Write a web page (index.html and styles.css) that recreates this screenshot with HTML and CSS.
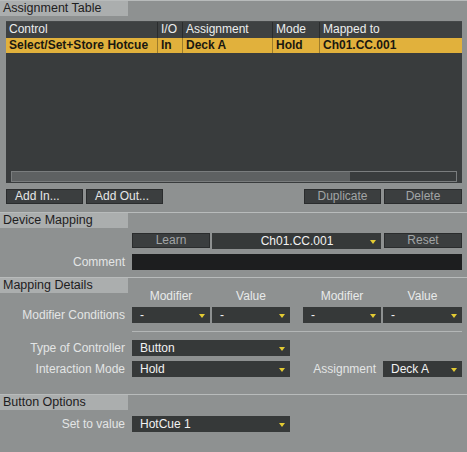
FILE: index.html
```html
<!DOCTYPE html>
<html>
<head>
<meta charset="utf-8">
<link rel="stylesheet" href="styles.css">
</head>
<body>
<div class="app">
  <div class="section-head"><div class="tab">Assignment Table</div></div>
  <div class="table-box">
    <div class="trow thead">
      <div class="cell">Control</div>
      <div class="cell">I/O</div>
      <div class="cell">Assignment</div>
      <div class="cell">Mode</div>
      <div class="cell">Mapped to</div>
    </div>
    <div class="trow tsel">
      <div class="cell">Select/Set+Store Hotcue</div>
      <div class="cell">In</div>
      <div class="cell">Deck A</div>
      <div class="cell">Hold</div>
      <div class="cell">Ch01.CC.001</div>
    </div>
    <div class="table-fill"></div>
    <div class="scroll"><div class="thumb"></div></div>
  </div>
  <div class="btn-row">
    <div class="btn light">Add In...</div>
    <div class="btn light">Add Out...</div>
    <div class="spacer"></div>
    <div class="btn">Duplicate</div>
    <div class="btn w78">Delete</div>
  </div>

  <div class="section-head sh-device"><div class="tab">Device Mapping</div></div>
  <div class="frow r-learn">
    <div class="label"></div>
    <div class="ctrls">
      <div class="btn w78">Learn</div>
      <div class="dd dd-center w169"><span class="dd-text">Ch01.CC.001</span><span class="caret"></span></div>
      <div class="btn w78 ml3">Reset</div>
    </div>
  </div>
  <div class="frow r-comment">
    <div class="label">Comment</div>
    <div class="comment"></div>
  </div>

  <div class="section-head sh-details"><div class="tab">Mapping Details</div></div>
  <div class="frow r-heads">
    <div class="label"></div>
    <div class="ctrls">
      <div class="pair">
        <div class="colhead w78">Modifier</div>
        <div class="colhead w78">Value</div>
      </div>
      <div class="pair gap13">
        <div class="colhead w78">Modifier</div>
        <div class="colhead w79">Value</div>
      </div>
    </div>
  </div>
  <div class="frow r-mod">
    <div class="label">Modifier Conditions</div>
    <div class="ctrls">
      <div class="pair">
        <div class="dd w78"><span class="dd-text">-</span><span class="caret"></span></div>
        <div class="dd w78"><span class="dd-text">-</span><span class="caret"></span></div>
      </div>
      <div class="pair gap13">
        <div class="dd w78"><span class="dd-text">-</span><span class="caret"></span></div>
        <div class="dd w79"><span class="dd-text">-</span><span class="caret"></span></div>
      </div>
    </div>
  </div>
  <div class="subsep"></div>
  <div class="frow r-type">
    <div class="label">Type of Controller</div>
    <div class="ctrls">
      <div class="dd w158"><span class="dd-text">Button</span><span class="caret"></span></div>
    </div>
  </div>
  <div class="frow r-mode">
    <div class="label">Interaction Mode</div>
    <div class="ctrls">
      <div class="dd w158"><span class="dd-text">Hold</span><span class="caret"></span></div>
      <div class="label inline-label">Assignment</div>
      <div class="dd w79"><span class="dd-text">Deck A</span><span class="caret"></span></div>
    </div>
  </div>

  <div class="section-head sh-button"><div class="tab">Button Options</div></div>
  <div class="frow r-set">
    <div class="label">Set to value</div>
    <div class="ctrls">
      <div class="dd w158"><span class="dd-text">HotCue 1</span><span class="caret"></span></div>
    </div>
  </div>
</div>
</body>
</html>
```

FILE: styles.css
```css
* { box-sizing: border-box; }
html, body { margin: 0; padding: 0; }
body {
  width: 467px;
  height: 452px;
  overflow: hidden;
  background: #8e9191;
  font-family: "Liberation Sans", Arial, sans-serif;
  font-size: 12px;
  color: #e6e8e8;
}
.app { width: 467px; height: 452px; }

.section-head {
  border-top: 1px solid #b8bbbb;
  height: 16px;
}
.tab {
  width: 128px;
  height: 15px;
  background: #abaeae;
  color: #1e2021;
  padding-left: 3px;
  line-height: 15px;
  font-size: 12.5px;
}

/* table */
.table-box {
  margin: 5px 5px 0 6px;
  height: 162px;
  background: #393c3d;
  display: flex;
  flex-direction: column;
}
.trow {
  display: grid;
  grid-template-columns: 151px 25px 90px 47px 1fr;
}
.thead {
  height: 17px;
  background: #3e4142;
  color: #eceeee;
  border-top: 1px solid #454849;
}
.thead .cell { line-height: 15px; }
.tsel {
  height: 15px;
  background: #e1b13c;
  color: #1a1810;
  font-weight: bold;
}
.tsel .cell { line-height: 15px; }
.cell {
  padding-left: 3px;
  white-space: nowrap;
  overflow: hidden;
}
.thead .cell + .cell { border-left: 1px solid #2a2c2d; }
.tsel .cell + .cell { border-left: 1px solid #9c7b2a; }
.table-fill { flex: 1; }
.scroll {
  margin: 0 5px 1px 5px;
  height: 11px;
  border: 1px solid #7a7d7e;
  display: flex;
}
.thumb { width: 338px; background: #5e6162; }

/* buttons */
.btn-row {
  display: flex;
  gap: 3px;
  margin: 6px 5px 0 6px;
  height: 15px;
}
.spacer { flex: 1; }
.btn {
  width: 77px;
  height: 15px;
  background: #3b3e3f;
  border: 1px solid #2a2c2d;
  color: #a2a5a6;
  text-align: center;
  line-height: 13px;
  flex: none;
}
.btn.light { color: #e6e7e7; text-align: left; padding-left: 8px; }
.w78 { width: 78px; }
.w79 { width: 79px; }
.w158 { width: 158px; }
.w169 { width: 169px; }
.ml3 { margin-left: 1px; }

.sh-device { margin-top: 8px; }
.sh-details { margin-top: 7px; }
.sh-button { margin-top: 17px; }

/* form rows */
.frow {
  display: flex;
  padding-right: 5px;
}
.label {
  width: 125px;
  margin-right: 7px;
  text-align: right;
  color: #e3e5e5;
  line-height: 16px;
  white-space: nowrap;
  flex: none;
}
.ctrls {
  display: flex;
  gap: 2px;
  flex: 1;
}
.pair { display: flex; gap: 2px; }
.gap13 { margin-left: 11px; }

.r-learn { margin-top: 5px; height: 16px; }
.r-comment { margin-top: 5px; height: 16px; }
.comment { flex: 1; height: 16px; background: #1d1e1f; }

.r-heads { margin-top: -3px; height: 13px; }
.colhead { text-align: center; line-height: 13px; color: #e8eaea; }
.r-mod { margin-top: 4px; height: 16px; }
.subsep {
  margin: 8px 5px 0 132px;
  height: 1px;
  background: #b3b6b6;
}
.r-type { margin-top: 8px; height: 16px; }
.r-mode { margin-top: 5px; height: 16px; }
.inline-label { width: 84px; margin-right: 5px; }
.r-set { margin-top: 6px; height: 16px; }

/* dropdown */
.dd {
  height: 16px;
  background: #363939;
  color: #f2f2f2;
  display: flex;
  align-items: center;
  padding-left: 8px;
  padding-right: 5px;
  flex: none;
}
.dd-text { flex: 1; white-space: nowrap; line-height: 16px; }
.dd-center .dd-text { text-align: center; padding-left: 4px; }
.caret {
  width: 0;
  height: 0;
  border-left: 3.5px solid transparent;
  border-right: 3.5px solid transparent;
  border-top: 4px solid #e3cb33;
  margin-top: 2px;
  flex: none;
}
```
